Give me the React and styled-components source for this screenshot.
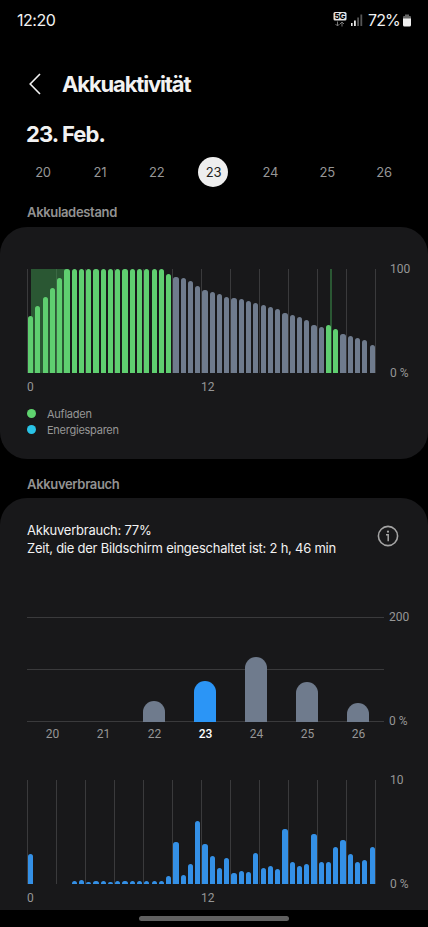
import React from "react";
import styled, { createGlobalStyle } from "styled-components";

const days = [20, 21, 22, 23, 24, 25, 26];
const selectedDay = 23;

// bar heights in px, one bar per half hour
const levels = [
  57, 66.3, 76, 85, 94.3, 104, 104, 104, 104, 104, 104, 104, 104, 104, 104, 104,
  104, 104, 104, 99, 95.3, 94.7, 91.3, 86.3, 82.3, 80.3, 78.3, 76, 74.3, 73.3,
  72, 70, 68, 66, 63.7, 59.3, 57.3, 55.3, 52.3, 48, 46, 47.3, 43.3, 38.7, 36.7,
  34.7, 32.3, 27.3,
];

const usage = [
  29.7, 0, 0, 0, 0, 0, 2.7, 3.7, 1.7, 2.7, 2.7, 1.7, 2.7, 2.7, 2.7, 2.7, 2.7,
  2.7, 2.7, 7.7, 42, 8.7, 20.3, 63, 40, 27.7, 16, 25.7, 11, 13, 12, 30.7, 16,
  18, 15, 54.7, 22.3, 18, 20.3, 49.7, 22.3, 22.3, 37, 44.3, 29.7, 22.3, 23.7,
  37,
];

const dailyUsage = { 22: 21.5, 23: 41, 24: 65, 25: 40, 26: 19 };

const isCharging = (i) => i < 20 || i === 41 || i === 42;

const StatusIcons = () => (
  <StatusRight>
    <svg width="14" height="17" viewBox="0 0 14 17">
      <rect x="0.5" y="0" width="13" height="8.5" rx="1.5" fill="#e6e6e6" />
      <text
        x="7"
        y="7.2"
        textAnchor="middle"
        fontFamily="Inter, sans-serif"
        fontWeight="800"
        fontSize="8"
        fill="#000"
      >
        5G
      </text>
      <path
        d="M4.5 9.500v4.500M2.500 12l2 2 2-2M9 14.500V10M7 12l2-2 2 2"
        fill="none"
        stroke="#777"
        strokeWidth="1"
      />
    </svg>
    <svg width="12" height="12" viewBox="0 0 12 12">
      <rect x="0" y="9" width="1.6" height="3" fill="#e6e6e6" />
      <rect x="3" y="6.5" width="1.8" height="5.5" fill="#e6e6e6" />
      <rect x="6.2" y="3.5" width="1.8" height="8.5" fill="#555" />
      <rect x="9.4" y="0.5" width="1.8" height="11.5" fill="#555" />
    </svg>
    <Percent>72%</Percent>
    <svg width="8" height="13" viewBox="0 0 8 13">
      <path d="M2 0.500h4V2h1q1 0 1 1v2H0V3q0-1 1-1h1z" fill="#666" />
      <path d="M0 4.500h8V11q0 1.500-1.500 1.500h-5Q0 12.500 0 11z" fill="#f0f0f0" />
    </svg>
  </StatusRight>
);

const HourChart = ({ data, max, charging }) => (
  <ChartRow>
    <div>
      <Plot>
        <Grid>
          {Array.from({ length: 13 }, (_, i) => (
            <i key={i} />
          ))}
        </Grid>
        {charging && (
          <>
            <ChargeSpan $left={4} $width={36} />
            <ChargeSpan $left={303} $width={2} />
          </>
        )}
        <Bars>
          {data.map((h, i) => (
            <Bar
              key={i}
              $color={
                charging ? (isCharging(i) ? "#5fce70" : "#6f7b8d") : "#3490e6"
              }
              style={{ height: h }}
            />
          ))}
        </Bars>
      </Plot>
      <Hours>
        <span>0</span>
        <span>12</span>
      </Hours>
    </div>
    <Scale>
      <span>{max}</span>
      <span>0 %</span>
    </Scale>
  </ChartRow>
);

const DailyChart = () => (
  <ChartRow $daily>
    <div>
      <DailyPlot>
        {days.map((d) => (
          <DailyBar
            key={d}
            $active={d === selectedDay}
            style={{ height: dailyUsage[d] || 0 }}
          />
        ))}
      </DailyPlot>
      <DailyLabels>
        {days.map((d) => (
          <DailyLabel key={d} $active={d === selectedDay}>
            {d}
          </DailyLabel>
        ))}
      </DailyLabels>
    </div>
    <Scale $daily>
      <span>200</span>
      <span>0 %</span>
    </Scale>
  </ChartRow>
);

const App = () => (
  <Screen>
    <GlobalStyle />
    <StatusBar>
      <Clock>12:20</Clock>
      <StatusIcons />
    </StatusBar>
    <Header>
      <svg width="12" height="22" viewBox="0 0 12 22">
        <path
          d="M11 1L1.200 11L11 21"
          fill="none"
          stroke="#f2f2f2"
          strokeWidth="1.6"
        />
      </svg>
      <h1>Akkuaktivität</h1>
    </Header>
    <DateTitle>23. Feb.</DateTitle>
    <DayPicker>
      {days.map((d) => (
        <Day key={d} $active={d === selectedDay}>
          {d}
        </Day>
      ))}
    </DayPicker>
    <SectionTitle>Akkuladestand</SectionTitle>
    <LevelCard>
      <HourChart data={levels} max="100" charging />
      <Legend>
        <LegendItem $color="#5fd36f">Aufladen</LegendItem>
        <LegendItem $color="#29c3e6">Energiesparen</LegendItem>
      </Legend>
    </LevelCard>
    <SectionTitle>Akkuverbrauch</SectionTitle>
    <UsageCard>
      <Summary>
        <div>
          <SummaryLine>Akkuverbrauch: 77%</SummaryLine>
          <SummaryLine>
            Zeit, die der Bildschirm eingeschaltet ist: 2 h, 46 min
          </SummaryLine>
        </div>
        <svg width="22" height="22" viewBox="0 0 22 22">
          <circle
            cx="11"
            cy="11"
            r="9.6"
            fill="none"
            stroke="#a4a4a4"
            strokeWidth="1.6"
          />
          <circle cx="11" cy="6.7" r="1.1" fill="#a4a4a4" />
          <path
            d="M9 9.700h2.200V16.200"
            fill="none"
            stroke="#a4a4a4"
            strokeWidth="1.5"
          />
        </svg>
      </Summary>
      <DailyChart />
      <HourChart data={usage} max="10" />
    </UsageCard>
    <NavBar>
      <span />
    </NavBar>
  </Screen>
);

const GlobalStyle = createGlobalStyle`
  * {
    box-sizing: border-box;
  }

  body {
    margin: 0;
    background: #000;
    overflow: hidden;
  }
`;

const Screen = styled.div`
  width: 428px;
  height: 927px;
  display: flex;
  flex-direction: column;
  overflow: hidden;

  background: #000;
  color: #f2f2f2;
  font-family: Inter, "Noto Sans", sans-serif;
`;

const StatusBar = styled.div`
  flex: 0 0 40px;
  display: flex;
  justify-content: space-between;
  padding: 0 17px;

  line-height: 40px;
`;

const Clock = styled.span`
  font-size: 16px;
  letter-spacing: -0.5px;
`;

const StatusRight = styled.div`
  display: flex;
  align-items: center;

  svg:nth-of-type(1) {
    margin-right: 4px;
  }
`;

const Percent = styled.span`
  margin: 0 3px 0 5px;

  font-size: 16px;
  letter-spacing: -0.8px;
`;

const Header = styled.div`
  flex: 0 0 80px;
  display: flex;
  align-items: center;
  gap: 21px;
  padding: 8px 0 0 29px;

  h1 {
    margin: 0;

    font-size: 22px;
    font-weight: 700;
    letter-spacing: -1.15px;
  }
`;

const DateTitle = styled.h2`
  flex: 0 0 30px;
  margin: -1px 0 8px 26px;

  font-size: 22px;
  line-height: 30px;
  font-weight: 700;
  letter-spacing: -0.9px;
`;

const DayPicker = styled.div`
  flex: 0 0 30px;
  display: flex;
  justify-content: space-between;
  padding: 0 29px 0 28px;
`;

const Day = styled.span`
  width: 30px;
  border-radius: 50%;

  font-size: 13px;
  line-height: 30px;
  letter-spacing: -0.3px;
  text-align: center;
  color: ${({ $active }) => ($active ? "#222" : "#969696")};
  background: ${({ $active }) => ($active ? "#eee" : "transparent")};
`;

const SectionTitle = styled.h3`
  flex: 0 0 39.5px;
  margin: 0;
  padding: 15px 0 0 27px;

  font-size: 13px;
  font-weight: 600;
  line-height: 20px;
  letter-spacing: -0.33px;
  color: #929292;
`;

const LevelCard = styled.section`
  flex: 0 0 232px;
  padding: 42px 0 0 27px;
  border-radius: 27px;

  background: #18181a;
`;

const UsageCard = styled.section`
  flex: 0 0 412px;
  padding: 23px 0 0 27px;
  border-radius: 27px 27px 0 0;
  overflow: hidden;

  background: #18181a;
`;

const ChartRow = styled.div`
  display: flex;
  gap: ${({ $daily }) => ($daily ? 5 : 14)}px;
  height: ${({ $daily }) => ($daily ? 163 : 133)}px;

  font-family: Roboto, sans-serif;
  font-size: 12px;
  color: #969696;
`;

const Plot = styled.div`
  position: relative;
  width: 349px;
  height: 104px;
`;

const Grid = styled.div`
  height: 100%;
  display: flex;
  justify-content: space-between;

  i {
    width: 1px;
    background: #3a3a3c;
  }
`;

const ChargeSpan = styled.div`
  position: absolute;
  top: 0;
  bottom: 0;
  left: ${({ $left }) => $left}px;
  width: ${({ $width }) => $width}px;

  background: rgba(60, 150, 75, 0.5);
`;

// drawn over the grid lines
const Bars = styled.div`
  position: absolute;
  inset: 0;
  display: flex;
  align-items: flex-end;
  justify-content: space-around;
`;

const Bar = styled.div`
  width: 5.2px;
  border-radius: 2.6px 2.6px 0 0;

  background: ${({ $color }) => $color};
`;

const Hours = styled.div`
  display: flex;
  padding-top: 6px;

  line-height: 16px;

  span {
    width: 174px;
  }
`;

const Scale = styled.div`
  height: 120px;
  margin-top: -8px;
  display: flex;
  flex-direction: column;
  justify-content: space-between;

  line-height: 16px;
`;

const DailyPlot = styled.div`
  width: 357px;
  height: 105px;
  display: flex;
  align-items: flex-end;

  background:
    linear-gradient(#3a3a3c, #3a3a3c) 0 0 / 100% 1px no-repeat,
    linear-gradient(#3a3a3c, #3a3a3c) 0 52px / 100% 1px no-repeat,
    linear-gradient(#3a3a3c, #3a3a3c) 0 104px / 100% 1px no-repeat;
`;

const DailyBar = styled.div`
  width: 22px;
  margin: 0 15px 0 14px;
  border-radius: 11px 11px 0 0;

  background: ${({ $active }) => ($active ? "#2b95f6" : "#6f7b8d")};
`;

const DailyLabels = styled.div`
  display: flex;
  padding-top: 4px;
`;

const DailyLabel = styled.span`
  width: 51px;

  line-height: 16px;
  text-align: center;
  font-weight: ${({ $active }) => ($active ? 500 : 400)};
  color: ${({ $active }) => ($active ? "#fff" : "#969696")};
`;

const Legend = styled.div`
  padding-top: 4px;
`;

const LegendItem = styled.div`
  display: flex;
  align-items: center;
  gap: 11px;
  height: 16px;

  font-size: 11px;
  letter-spacing: -0.25px;
  color: #969696;

  &::before {
    content: "";
    width: 9px;
    height: 9px;
    border-radius: 50%;

    background: ${({ $color }) => $color};
  }
`;

const Summary = styled.div`
  height: 96px;
  display: flex;
  align-items: flex-start;
  justify-content: space-between;
  padding-right: 29px;

  svg {
    margin-top: 4px;
  }
`;

const SummaryLine = styled.div`
  font-size: 13px;
  line-height: 18px;
  letter-spacing: -0.235px;
`;

const NavBar = styled.div`
  flex: 0 0 17px;
  display: flex;
  justify-content: center;
  padding-top: 6px;

  span {
    width: 150px;
    height: 5px;
    border-radius: 3px;

    background: #606060;
  }
`;

export default App;
